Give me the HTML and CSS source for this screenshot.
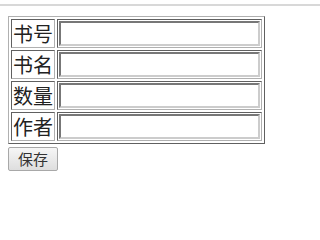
FILE: index.html
```html
<!DOCTYPE html>
<html>
<head>
<meta charset="utf-8">
<link rel="stylesheet" href="styles.css">
</head>
<body>
<div class="topbar"></div>
<div class="content">
  <table class="book-form">
    <tr><td class="label">书号</td><td class="field"><input type="text" class="text-input"></td></tr>
    <tr><td class="label">书名</td><td class="field"><input type="text" class="text-input"></td></tr>
    <tr><td class="label">数量</td><td class="field"><input type="text" class="text-input"></td></tr>
    <tr><td class="label">作者</td><td class="field"><input type="text" class="text-input"></td></tr>
  </table>
  <button class="save-btn">保存</button>
</div>
</body>
</html>
```
FILE: styles.css
```css
html, body {
  margin: 0;
  padding: 0;
  background: #ffffff;
  font-family: "Noto Sans CJK SC", "Liberation Sans", sans-serif;
}
.topbar {
  height: 4px;
  border-bottom: 2px solid #d8d8d8;
}
.content {
  padding: 10px 8px 0 8px;
}
.book-form {
  border: 1px solid;
  border-color: #b0b0b0 #606060 #606060 #b0b0b0;
  border-spacing: 2px;
  border-collapse: separate;
}
.book-form td {
  border: 1px solid;
  border-color: #606060 #b0b0b0 #b0b0b0 #606060;
  padding: 1px;
}
.label {
  font-size: 20px;
  line-height: 25px;
  color: #222;
  width: 40px;
  white-space: nowrap;
}
.field {
  width: 201px;
}
.text-input {
  display: block;
  box-sizing: border-box;
  width: 201px;
  height: 25px;
  margin: 0;
  padding: 0 2px;
  border: 2px solid;
  border-color: #777 #ccc #ccc #777;
  background: #fff;
  font-size: 14px;
}
.save-btn {
  display: block;
  margin-top: 3px;
  box-sizing: border-box;
  width: 50px;
  height: 24px;
  padding: 0;
  font-family: "Noto Sans CJK SC", sans-serif;
  font-size: 15px;
  line-height: 20px;
  color: #333;
  border: 1px solid #a8a8a8;
  border-radius: 2px;
  background: linear-gradient(#f6f6f6, #dedede);
}
```
